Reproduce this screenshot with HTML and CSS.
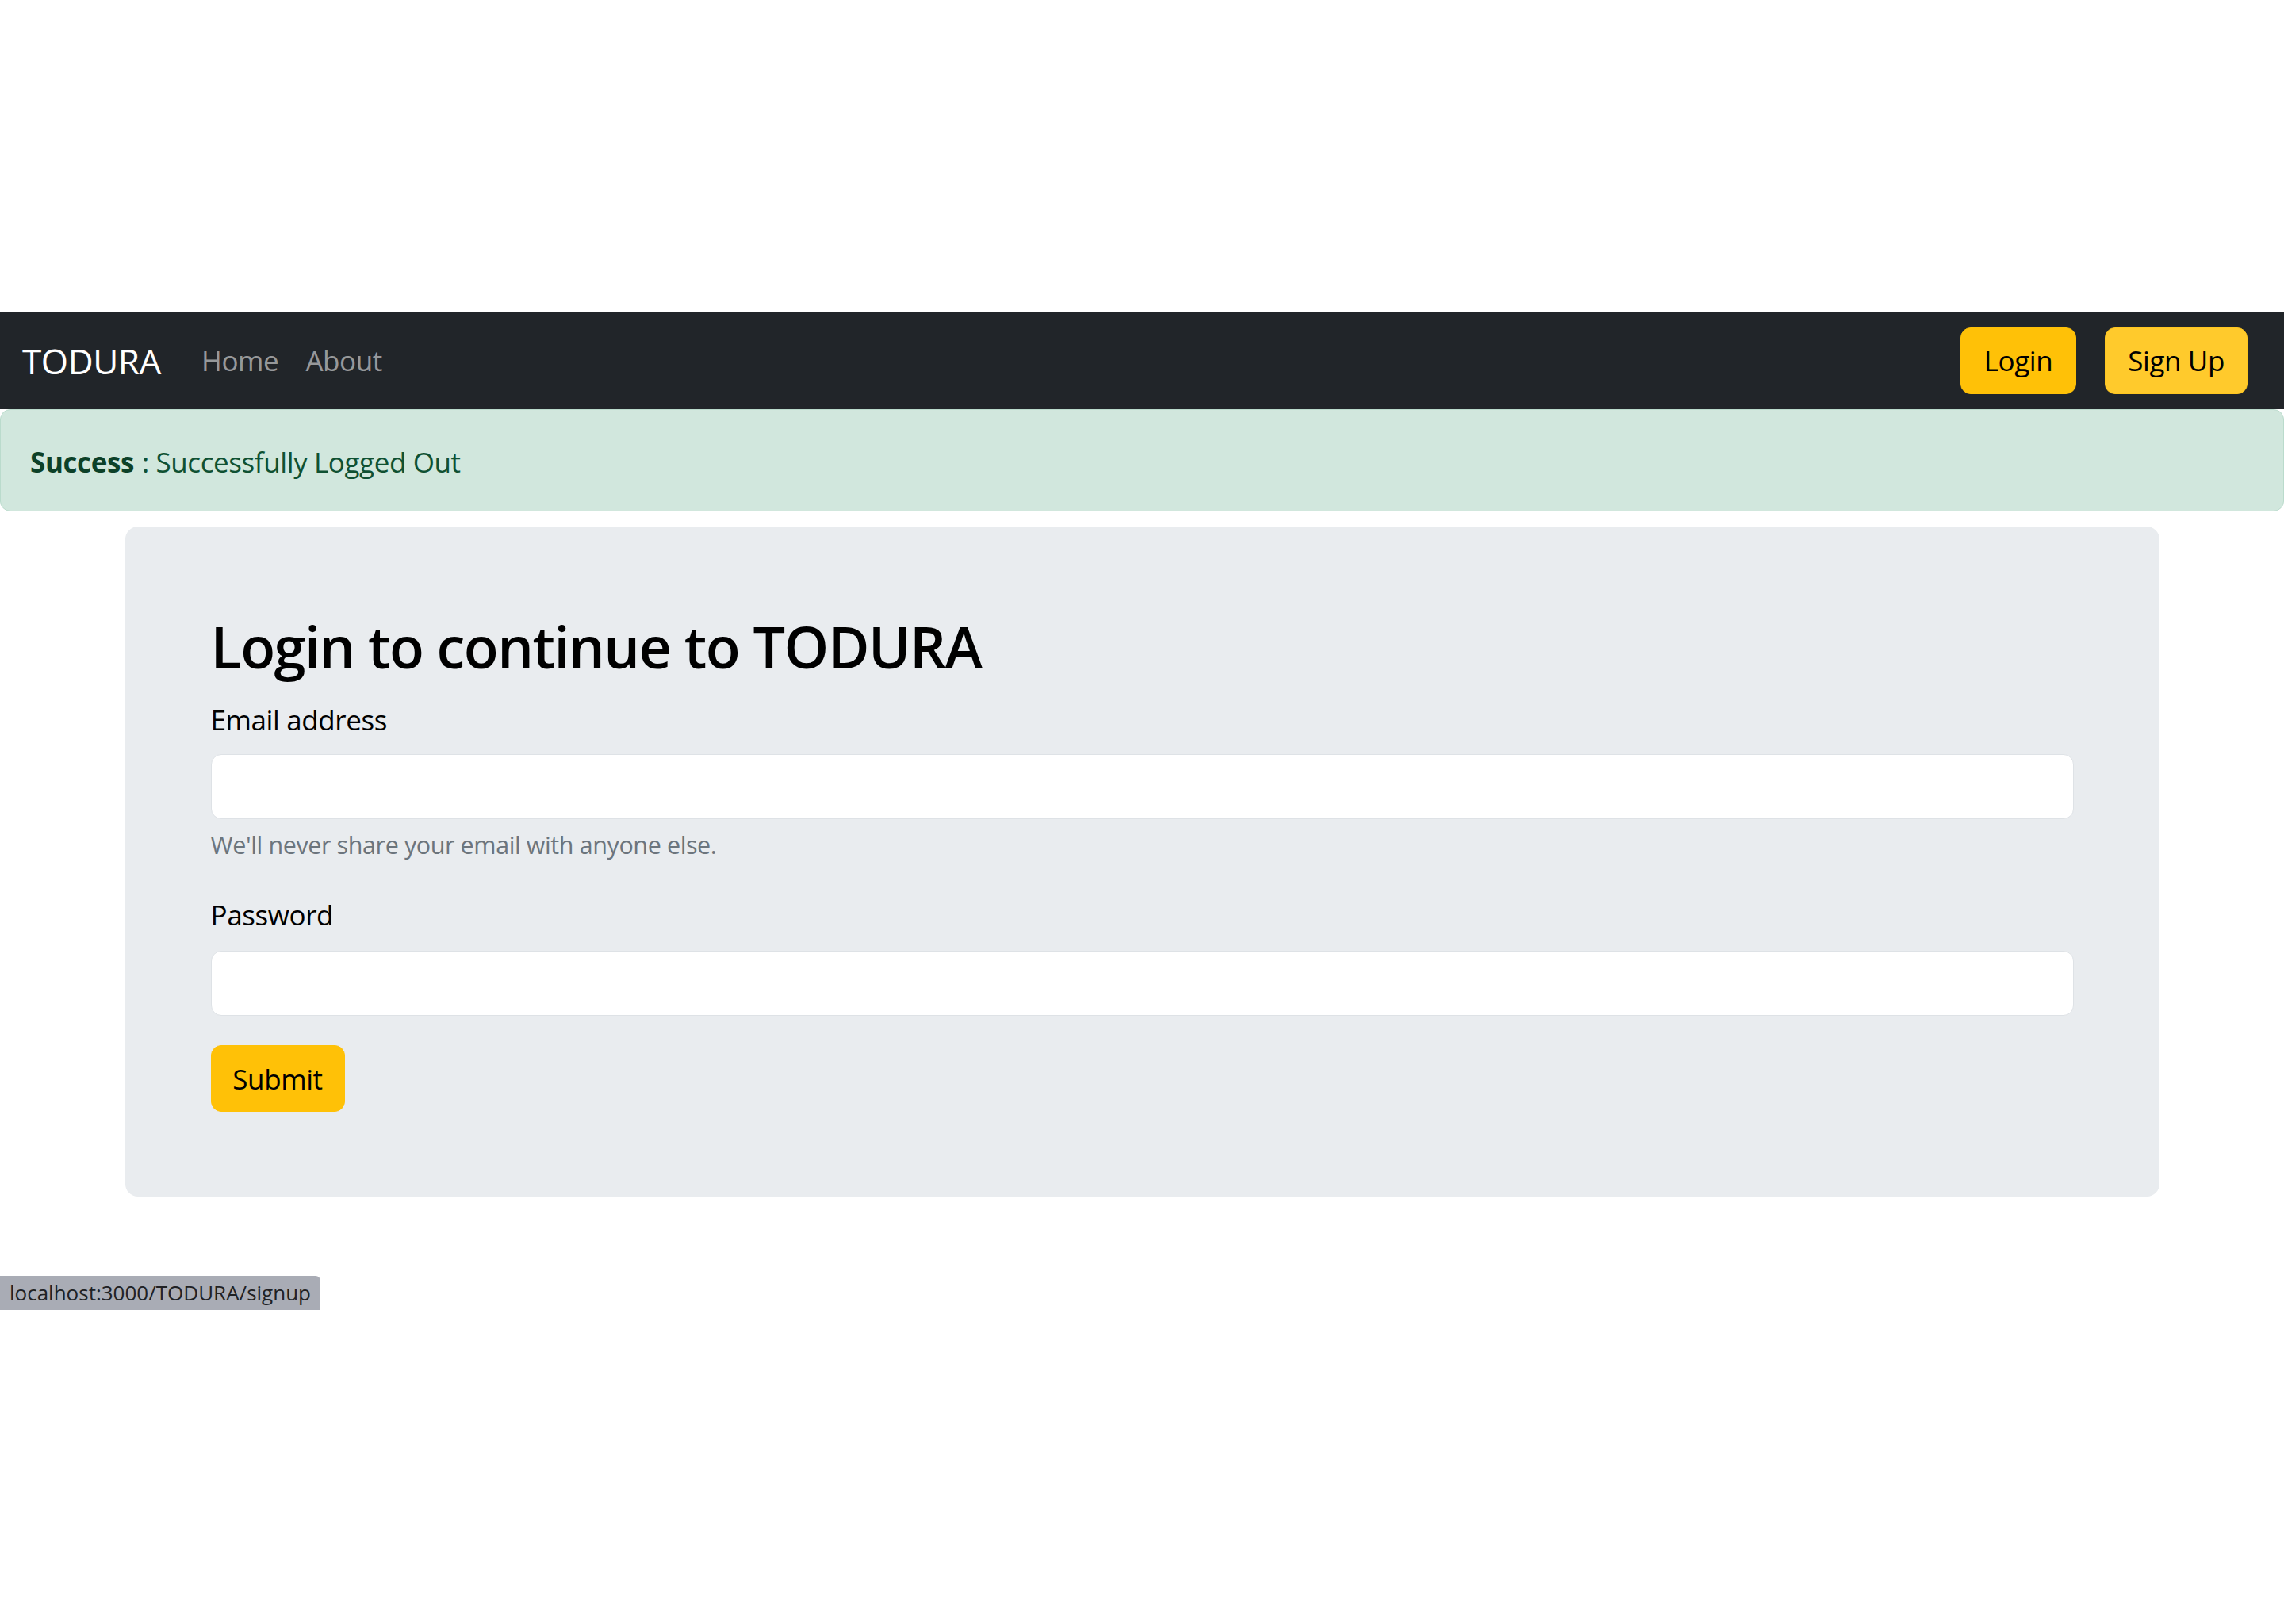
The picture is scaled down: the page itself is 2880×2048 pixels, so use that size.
FILE: index.html
```html
<!DOCTYPE html>
<html lang="en">
<head>
<meta charset="utf-8">
<title>TODURA - Login</title>
<link rel="stylesheet" href="styles.css">
</head>
<body>
<div class="viewport">
  <nav class="navbar">
    <a class="brand" href="#">TODURA</a>
    <ul class="nav-links">
      <li><a href="#">Home</a></li>
      <li><a href="#">About</a></li>
    </ul>
    <div class="nav-actions">
      <a class="btn btn-warning btn-login" href="#">Login</a>
      <a class="btn btn-warning btn-hover" href="#">Sign Up</a>
    </div>
  </nav>
  <div class="alert"><strong>Success</strong> : Successfully Logged Out</div>
  <main class="card">
    <h1 class="title">Login to continue to TODURA</h1>
    <form class="form">
      <div class="group">
        <label class="label" for="email">Email address</label>
        <input class="input" type="email" id="email">
        <div class="help">We'll never share your email with anyone else.</div>
      </div>
      <div class="group group-pass">
        <label class="label" for="pass">Password</label>
        <input class="input" type="password" id="pass">
      </div>
      <button class="btn btn-warning submit" type="submit">Submit</button>
    </form>
  </main>
  <div class="statusbar">localhost:3000/TODURA/signup</div>
</div>
</body>
</html>
```
FILE: styles.css
```css
* { box-sizing: border-box; }
html, body { margin: 0; padding: 0; background: #fff; }
body {
  font-family: "Open Sans", "Noto Sans", sans-serif;
  color: #212529;
  letter-spacing: -0.4px;
}
.viewport {
  position: relative;
  margin-top: 393px;
  height: 1259px;
}
.navbar {
  display: flex;
  align-items: center;
  height: 123px;
  background: #212529;
  padding: 0 46px 0 28px;
}
.brand {
  font-size: 44px;
  color: #fff;
  text-decoration: none;
  margin-right: 34px;
}
.nav-links {
  display: flex;
  list-style: none;
  margin: 0;
  padding: 0;
  flex: 1;
}
.nav-links a {
  display: block;
  padding: 0 17px;
  font-size: 35px;
  color: rgba(255,255,255,.55);
  text-decoration: none;
}
.nav-actions {
  display: flex;
  gap: 36px;
}
.btn {
  display: inline-flex;
  align-items: center;
  justify-content: center;
  height: 84px;
  padding: 0 28px;
  border: 1px solid #ffc107;
  border-radius: 13px;
  font-family: inherit;
  font-size: 35px;
  letter-spacing: -0.4px;
  color: #000;
  text-decoration: none;
}
.btn-login { padding: 0 29px; }
.btn-warning { background: #ffc107; }
.btn-hover { background: #ffca2c; border-color: #ffc720; }
.alert {
  height: 129px;
  display: flex;
  align-items: center;
  padding: 4px 37px 0;
  background: #d1e7dd;
  border: 1px solid #badbcc;
  border-radius: 13px;
  color: #0f5132;
  font-size: 35px;
}
.alert strong { font-weight: 700; color: #0c4128; margin-right: 10px; }
.card {
  width: 2565px;
  height: 845px;
  margin: 19px auto 0;
  padding: 108px 108px 0;
  background: #e9ecef;
  border-radius: 16px;
}
.title {
  margin: 0 0 24px;
  font-size: 72px;
  line-height: 86px;
  font-weight: 600;
  letter-spacing: -1.5px;
  color: #000;
}
.form { display: flex; flex-direction: column; align-items: flex-start; }
.group { width: 100%; }
.group-pass { margin-top: 40px; margin-bottom: 37px; }
.label {
  display: block;
  font-size: 35px;
  line-height: 52px;
  margin-bottom: 17px;
  color: #000;
}
.group-pass .label { margin-bottom: 19px; }
.input {
  display: block;
  width: 100%;
  height: 82px;
  background: #fff;
  border: 1px solid #dee2e6;
  border-radius: 13px;
  font-size: 35px;
}
.help {
  margin-top: 9px;
  font-size: 30.5px;
  line-height: 46px;
  color: #6c757d;
}
.submit { width: 169px; padding: 0; }
.statusbar {
  position: absolute;
  left: 0;
  bottom: 0;
  width: 404px;
  height: 43px;
  padding-left: 12px;
  background: #a9acb5;
  border-top-right-radius: 6px;
  font-size: 26px;
  letter-spacing: 0;
  line-height: 43px;
  color: #202124;
  white-space: nowrap;
}
```
